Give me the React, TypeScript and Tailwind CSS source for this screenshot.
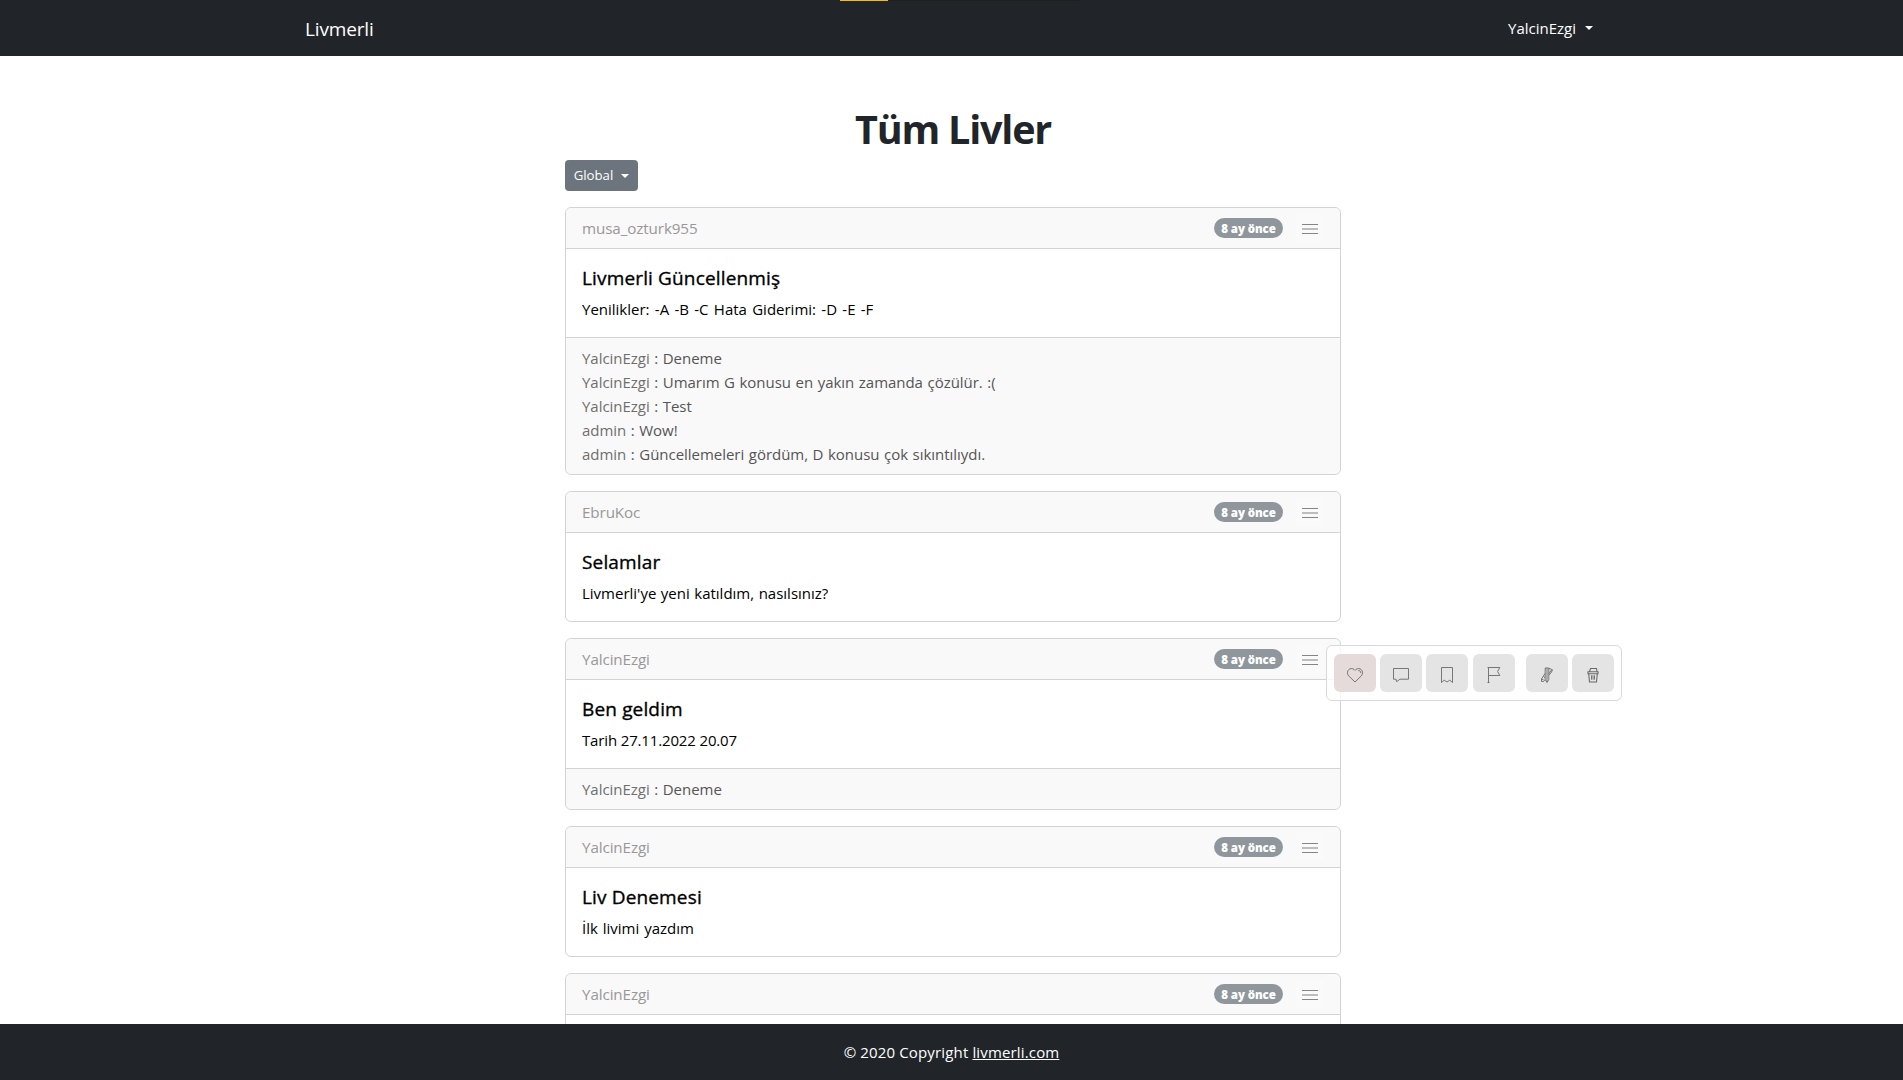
import type { ReactNode } from "react";

type Comment = { user: string; text: string };
type Post = {
  user: string;
  title?: string;
  body?: string;
  bodyClass?: string;
  comments?: Comment[];
  menu?: boolean;
};

const posts: Post[] = [
  {
    user: "musa_ozturk955",
    title: "Livmerli Güncellenmiş",
    body: "Yenilikler: -A -B -C Hata Giderimi: -D -E -F",
    bodyClass: "[word-spacing:1.4px]",
    comments: [
      { user: "YalcinEzgi", text: "Deneme" },
      { user: "YalcinEzgi", text: "Umarım G konusu en yakın zamanda çözülür. :(" },
      { user: "YalcinEzgi", text: "Test" },
      { user: "admin", text: "Wow!" },
      { user: "admin", text: "Güncellemeleri gördüm, D konusu çok sıkıntılıydı." },
    ],
  },
  {
    user: "EbruKoc",
    title: "Selamlar",
    body: "Livmerli'ye yeni katıldım, nasılsınız?",
    bodyClass: "[word-spacing:0.6px]",
  },
  {
    user: "YalcinEzgi",
    title: "Ben geldim",
    body: "Tarih 27.11.2022 20.07",
    bodyClass: "tracking-[-0.15px]",
    comments: [{ user: "YalcinEzgi", text: "Deneme" }],
    menu: true,
  },
  { user: "YalcinEzgi", title: "Liv Denemesi", body: "İlk livimi yazdım", bodyClass: "[word-spacing:1px]" },
  { user: "YalcinEzgi" },
];

function Caret() {
  return <span className="inline-block border-x-4 border-t-4 border-x-transparent border-t-current" />;
}

function Icon({ children }: { children: ReactNode }) {
  return (
    <svg width="16" height="16" viewBox="0 0 16 16" fill="none" stroke="#6a6a6a" strokeWidth="0.9" className="mt-[3px]">
      {children}
    </svg>
  );
}

function ActionButton({ className, children }: { className: string; children: ReactNode }) {
  return (
    <button className={`flex h-[38px] w-[42px] items-center justify-center rounded-md ${className}`}>{children}</button>
  );
}

function ActionMenu() {
  return (
    <div className="absolute top-[6px] left-[760px] flex h-14 w-[296px] items-center rounded-md border border-[#d9d9d9] bg-white/80 pl-[7px]">
      <ActionButton className="bg-[#e5d9d9]/95">
        <Icon>
          <path d="M8 15 1.600 8.800C-.3 6.400.5 3 2.600 2 4.800 1 6.900 1.800 8 3.400 9.100 1.800 11.200 1 13.400 2 15.500 3 16.300 6.400 14.400 8.800Z" />
          <path d="M11.300 3.500c1.500-.1 2.500.9 2.500 2.500" />
        </Icon>
      </ActionButton>
      <ActionButton className="ml-1 bg-[#e4e4e4]">
        <Icon>
          <path d="M.5 1.500h15v10.700H7L3.600 14.700 3 12.200H.5z" />
        </Icon>
      </ActionButton>
      <ActionButton className="ml-1 bg-[#e4e4e4]">
        <Icon>
          <path d="M2.500.5h11v15L10.800 13.200 8 15 5.200 13.200 2.500 15.500z" />
        </Icon>
      </ActionButton>
      <ActionButton className="ml-[5px] bg-[#e4e4e4]">
        <Icon>
          <path d="M2.500 16V.5M1.500.5h12.300L11.600 4.500l2.200 4H2.500" />
          <path d="M1.500 15.500h2" />
        </Icon>
      </ActionButton>
      <ActionButton className="ml-[11px] bg-[#e4e4e4]">
        <Icon>
          <path d="M6.200 1h3.600v11.500L8 15.500 6.200 12.500zM8 1v13.500M10 1.300l3.500 1.500-1.200 2.700L10 8M12.500 3 10 6.500M6 6.500 2.500 12v2.500h2L6 12.700M2.500 12l2 .8M4.500 9.500l1.500 1" />
        </Icon>
      </ActionButton>
      <ActionButton className="ml-1 bg-[#e4e4e4]">
        <Icon>
          <path d="M4.500 4.500 5.500 1.500h6L12 4.500M3 4.700h10v2H3zM3.700 6.700l.8 8.300h7l.8-8.300" strokeWidth="1.1" />
          <path d="M6.500 8.300v4.400M8 8.300v4.400M9.500 8.300v4.400" />
        </Icon>
      </ActionButton>
    </div>
  );
}

function PostCard({ post }: { post: Post }) {
  return (
    <article className="relative rounded-md border border-[#d2d3d4] bg-white">
      <header className="flex h-[41px] items-center rounded-t-md border-b border-[#d2d3d4] bg-[#f9f9f9] pl-4 text-[15.2px] tracking-[-0.1px] text-[#989898]">
        <span>{post.user}</span>
        <span className="mr-[13px] ml-auto flex h-5 w-[69px] items-center justify-center rounded-full bg-[#90979c] pt-px text-[11.5px] font-extrabold tracking-[-0.1px] text-white">
          8 ay önce
        </span>
        <button className="mr-4 flex h-7 w-7 items-center justify-center rounded bg-[#fafafa]">
          <svg width="16" height="10" viewBox="0 0 16 10" className="mt-px">
            <path d="M0 .5h16M0 9.500h16" stroke="#858585" />
            <path d="M0 5h16" stroke="#bdbdbd" strokeWidth="2" />
          </svg>
        </button>
      </header>
      <div className="h-[88px] px-4 pt-[17px]">
        {post.title && (
          <h2 className="mb-[7px] text-[19px] leading-6 font-medium tracking-[0.15px] text-black [-webkit-text-stroke:0.35px_black]">
            {post.title}
          </h2>
        )}
        {post.body && <p className={`text-[15px] leading-6 text-black ${post.bodyClass ?? ""}`}>{post.body}</p>}
      </div>
      {post.comments && (
        <footer className="rounded-b-md border-t border-[#d2d3d4] bg-[#f9f9f9] px-4 py-2 text-[15px] leading-6 tracking-[-0.03px] [word-spacing:0.7px]">
          {post.comments.map((c, i) => (
            <p key={i} className="text-[#555]">
              <span className="text-[#6f6f6f]">{c.user}</span> : {c.text}
            </p>
          ))}
        </footer>
      )}
      {post.menu && <ActionMenu />}
    </article>
  );
}

export default function App() {
  return (
    <div className="flex h-[1080px] w-full flex-col overflow-hidden bg-white font-['Open_Sans','Noto_Sans',sans-serif] text-[#212529]">
      <nav className="relative flex h-14 shrink-0 items-center justify-between bg-[#212529] pr-[310px] pl-[305px] text-white">
        <div className="absolute top-0 left-[840px] h-px w-[240px] bg-[#1f1f1f]">
          <div className="h-px w-12 bg-[#ffb900]" />
        </div>
        <span className="pt-[2px] text-[19px] tracking-[-0.15px]">Livmerli</span>
        <span className="flex items-center gap-[9px] text-[15px]">
          YalcinEzgi <Caret />
        </span>
      </nav>
      <main className="min-h-0 flex-1 overflow-hidden pl-[3px]">
        <div className="mx-auto w-[776px] pt-[49px]">
          <h1 className="mb-[7px] text-center text-[39.5px] leading-[48px] font-bold tracking-[-1.2px]">Tüm Livler</h1>
          <button className="mb-4 flex h-[31px] w-[73px] items-center justify-center gap-2 rounded bg-[#6c757d] pt-px text-[13.2px] text-white">
            Global <Caret />
          </button>
          <div className="flex flex-col gap-4">
            {posts.map((p, i) => (
              <PostCard key={i} post={p} />
            ))}
          </div>
        </div>
      </main>
      <footer className="flex h-14 shrink-0 items-center justify-center bg-[#212529] text-[15px] tracking-[0.15px] text-white">
        <p>
          © 2020 Copyright <a className="underline">livmerli.com</a>
        </p>
      </footer>
    </div>
  );
}
